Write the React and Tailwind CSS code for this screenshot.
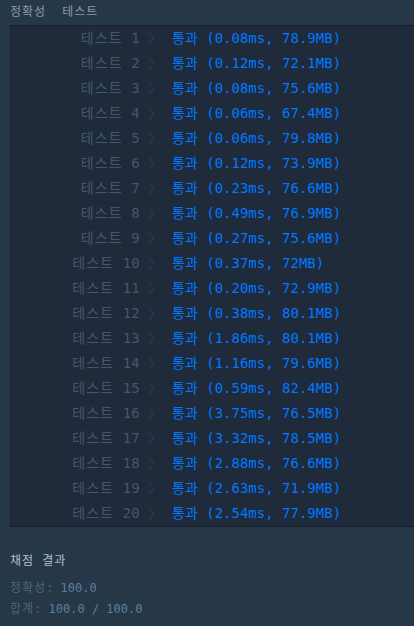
const RESULTS = [
  ['0.08ms', '78.9MB'],
  ['0.12ms', '72.1MB'],
  ['0.08ms', '75.6MB'],
  ['0.06ms', '67.4MB'],
  ['0.06ms', '79.8MB'],
  ['0.12ms', '73.9MB'],
  ['0.23ms', '76.6MB'],
  ['0.49ms', '76.9MB'],
  ['0.27ms', '75.6MB'],
  ['0.37ms', '72MB'],
  ['0.20ms', '72.9MB'],
  ['0.38ms', '80.1MB'],
  ['1.86ms', '80.1MB'],
  ['1.16ms', '79.6MB'],
  ['0.59ms', '82.4MB'],
  ['3.75ms', '76.5MB'],
  ['3.32ms', '78.5MB'],
  ['2.88ms', '76.6MB'],
  ['2.63ms', '71.9MB'],
  ['2.54ms', '77.9MB'],
]

const MONO = { fontFamily: '"DejaVu Sans Mono", "Noto Sans CJK KR", monospace' }

export default function App() {
  return (
    <div className="w-[414px] h-[626px] overflow-hidden bg-[#263747]" style={MONO}>
      {/* heading */}
      <div className="flex h-[23px] items-center pl-[10px] text-[12px] text-[#8a9aab]">
        <span className="tracking-[1px]">정확성</span>
        <span className="ml-[16px] tracking-[1px]">테스트</span>
      </div>

      {/* result table */}
      <div className="mt-[2px] ml-[10px] w-[420px] border border-[#172130] bg-[#1f2a3a]">
        {RESULTS.map(([time, mem], i) => (
          <div key={i} className="flex h-[25px] items-center text-[14px] whitespace-pre">
            <div className="w-[151px] text-right text-[#44576c]">
              <span className="tracking-[1.1px]">테스트</span> {i + 1} <span className="text-[#2e3d4f]">〉</span>
            </div>
            <div className="ml-[10px] text-[#0078ff]">통과 ({time}, {mem})</div>
          </div>
        ))}
      </div>

      {/* score summary */}
      <div className="pl-[10px] pt-[23px]">
        <div className="h-[22px] flex items-center text-[12px] text-[#b2bfcb] whitespace-pre tracking-[1px]">채점 결과</div>
        <div className="mt-[6px] h-[20px] flex items-center text-[12px] whitespace-pre">
          <span className="text-[#4f6579]"><span className="tracking-[1px]">정확성</span>: </span>
          <span className="text-[#5c7fa0]">100.0</span>
        </div>
        <div className="mt-[1px] h-[20px] flex items-center text-[12px] whitespace-pre">
          <span className="text-[#4f6579]"><span className="tracking-[1px]">합계</span>: </span>
          <span className="text-[#5c7fa0]">100.0 / 100.0</span>
        </div>
      </div>
    </div>
  )
}
